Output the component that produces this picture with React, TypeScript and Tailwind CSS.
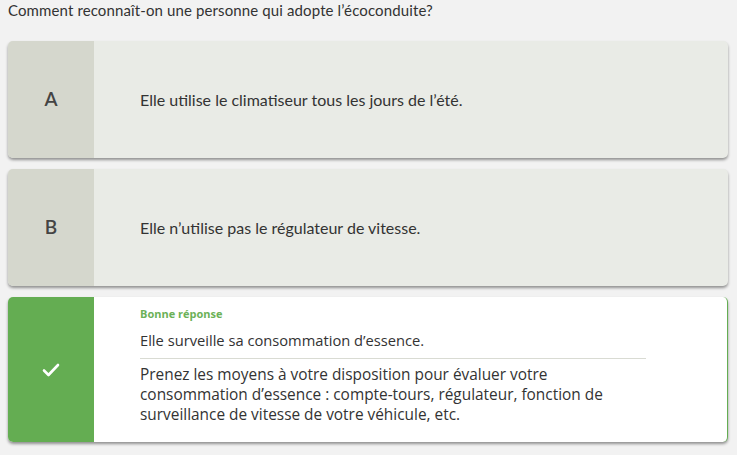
import React from "react";

const font = { fontFamily: "Lato, 'Liberation Sans', sans-serif" };
const font2 = { fontFamily: "'Open Sans', 'Noto Sans', sans-serif" };

function Option({ letter, text }: { letter: string; text: string }) {
  return (
    <div className="flex h-[117px] w-[720px] overflow-hidden rounded-[5px] bg-[#e9ebe6] shadow-[0_2px_3px_rgba(0,0,0,0.4)]">
      <div className="flex w-[86px] shrink-0 items-center justify-center bg-[#d5d7cd] text-[19px] font-semibold text-[#444]">
        {letter}
      </div>
      <div className="flex items-center pl-[46px] text-[16px] leading-5 text-[#333]">{text}</div>
    </div>
  );
}

export default function App() {
  return (
    <div className="h-[455px] w-[737px] bg-[#f2f2f2] px-2" style={font}>
      <p className="text-[15px] leading-5 tracking-[0.12px] text-[#333]">Comment reconnaît-on une personne qui adopte l’écoconduite?</p>
      <div className="mt-[21px] flex flex-col gap-[11px]">
        <Option letter="A" text="Elle utilise le climatiseur tous les jours de l’été." />
        <Option letter="B" text="Elle n’utilise pas le régulateur de vitesse." />
        <div className="flex w-[720px] overflow-hidden rounded-[5px] border-r border-[#64ad52] bg-white shadow-[0_2px_3px_rgba(0,0,0,0.4)]">
          <div className="flex w-[86px] shrink-0 items-center justify-center bg-[#64ad52]">
            <svg width="18" height="14" viewBox="0 0 18 14">
              <polyline points="2,7.5 6.5,12 16,2" fill="none" stroke="white" strokeWidth="2.6" strokeLinecap="round" strokeLinejoin="round" />
            </svg>
          </div>
          <div className="flex-1 pb-[17px] pl-[46px] pr-[81px] pt-[9px]" style={font2}>
            <div className="text-[11px] font-bold leading-4 text-[#6bb157]">Bonne réponse</div>
            <div className="mt-2 text-[14.7px] leading-5 text-[#333]">Elle surveille sa consommation d’essence.</div>
            <div className="mt-2 h-px bg-[#d9dbd3]" />
            <div className="mt-[6px] text-[15.4px] leading-5 text-[#333]">
              Prenez les moyens à votre disposition pour évaluer votre
              <br />
              consommation d’essence : compte-tours, régulateur, fonction de
              <br />
              surveillance de vitesse de votre véhicule, etc.
            </div>
          </div>
        </div>
      </div>
    </div>
  );
}
